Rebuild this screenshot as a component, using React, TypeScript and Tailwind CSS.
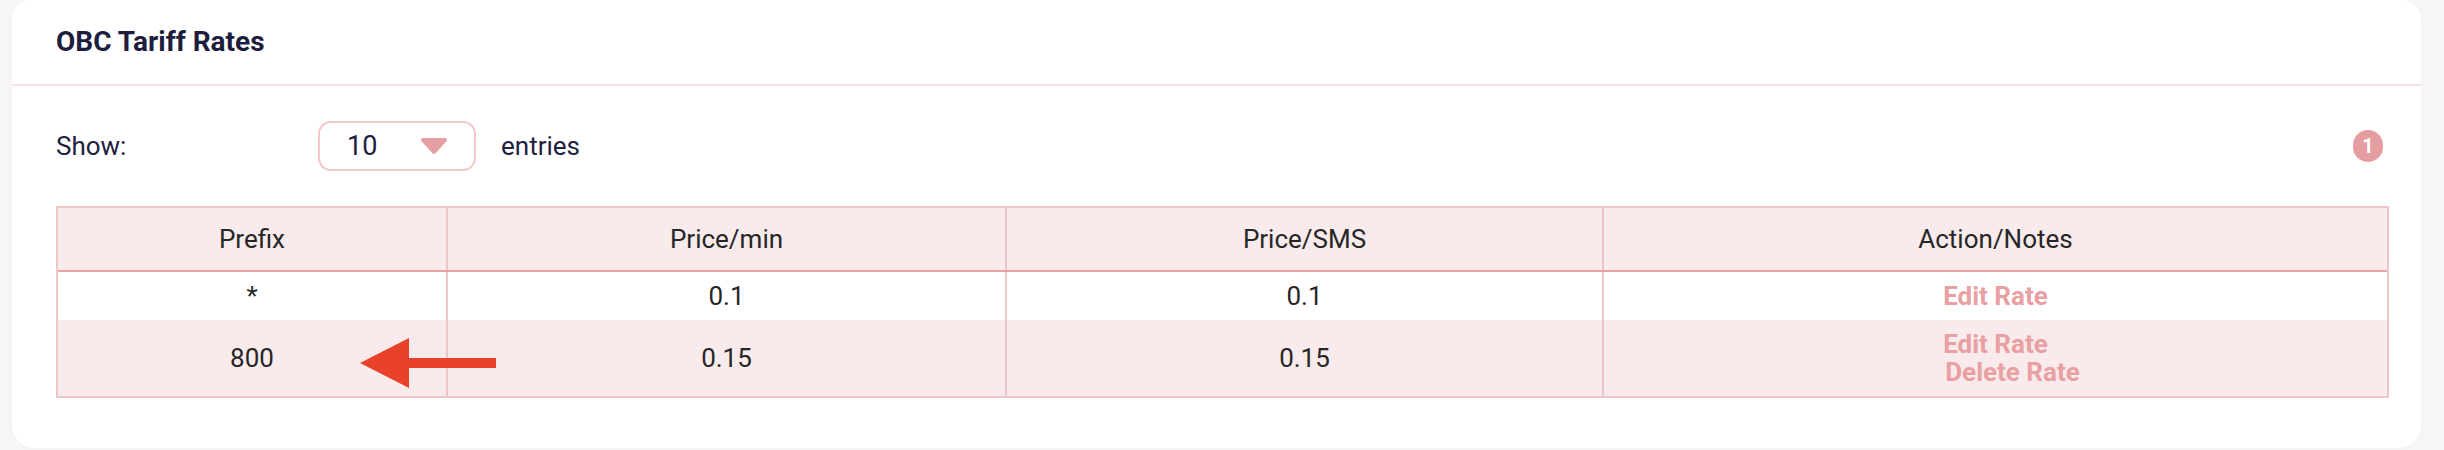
const rows = [
  { prefix: "*", perMin: "0.1", perSms: "0.1", actions: ["Edit Rate"], shade: false },
  { prefix: "800", perMin: "0.15", perSms: "0.15", actions: ["Edit Rate", "Delete Rate"], shade: true },
];

const cols = "grid grid-cols-[388px_559px_597px_1fr]";

function CaretDown() {
  return (
    <svg width="28" height="18" viewBox="0 0 28 18" className="block">
      <path
        d="M3 3 L25 3 L14 15 Z"
        fill="#e59fa2"
        stroke="#e59fa2"
        strokeWidth="4"
        strokeLinejoin="round"
      />
    </svg>
  );
}

function PointerArrow() {
  return (
    <svg width="136" height="50" viewBox="0 0 136 50" className="absolute left-[302px] top-[130px]">
      <path d="M0 25 L49 0 L49 20 L136 20 L136 30 L49 30 L49 50 Z" fill="#e8432a" />
    </svg>
  );
}

export default function App() {
  return (
    <div className="h-[450px] bg-[#f6f6f6] pl-[12px] pr-[23px] font-['Roboto',sans-serif]">
      <div className="h-[448px] rounded-b-[22px] rounded-t-[18px] bg-white shadow-[0_0_3px_rgba(0,0,0,0.04)]">
        <div className="flex h-[84px] items-center pl-[44px]">
          <h2 className="text-[28px] font-bold text-[#1d1d3d]">OBC Tariff Rates</h2>
        </div>
        <div className="h-[2px] bg-[#f9e2e3]" />

        <div className="pl-[44px] pr-[32px]">
          <div className="mt-[35px] flex h-[50px] items-center text-[26px] text-[#1f2040]">
            <span className="w-[262px]">Show:</span>
            <div className="flex h-[50px] w-[158px] items-center rounded-[13px] border-2 border-[#f3c7c9] pl-[27px] pr-[26px]">
              <span className="text-[27px]">10</span>
              <span className="ml-auto">
                <CaretDown />
              </span>
            </div>
            <span className="ml-[25px]">entries</span>
            <span className="ml-auto mr-[6px] flex h-[32px] w-[30px] items-center justify-center rounded-full bg-[#e49da0] text-[20px] font-bold text-white">
              1
            </span>
          </div>

          <div className="relative mt-[35px] border-2 border-[#efc6c8] text-[26px] text-[#262626]">
            <div className={`${cols} h-[64px] border-b-2 border-[#e6a2a5] bg-[#f9eaeb]`}>
              <div className="flex items-center justify-center">Prefix</div>
              <div className="flex items-center justify-center border-l-2 border-[#efc6c8]">Price/min</div>
              <div className="flex items-center justify-center border-l-2 border-[#efc6c8]">Price/SMS</div>
              <div className="flex items-center justify-center border-l-2 border-[#efc6c8]">Action/Notes</div>
            </div>
            {rows.map((row) => (
              <div
                key={row.prefix}
                className={`${cols} leading-[28px] ${row.shade ? "bg-[#f9eaeb]" : "bg-white"}`}
              >
                <div className="flex items-center justify-center py-[10px]">{row.prefix}</div>
                <div className="flex items-center justify-center border-l-2 border-[#efc6c8] py-[10px]">
                  {row.perMin}
                </div>
                <div className="flex items-center justify-center border-l-2 border-[#efc6c8] py-[10px]">
                  {row.perSms}
                </div>
                <div className="flex items-center justify-center border-l-2 border-[#efc6c8] py-[10px]">
                  <div className="flex flex-col items-start font-bold text-[#e8a0a3]">
                    {row.actions.map((a, i) =>
                      i === 0 ? (
                        <a key={a} className="whitespace-nowrap">
                          {a}
                        </a>
                      ) : (
                        <a key={a} className="ml-[2px] w-0 whitespace-nowrap">
                          {a}
                        </a>
                      ),
                    )}
                  </div>
                </div>
              </div>
            ))}
            <PointerArrow />
          </div>
        </div>
      </div>
    </div>
  );
}
